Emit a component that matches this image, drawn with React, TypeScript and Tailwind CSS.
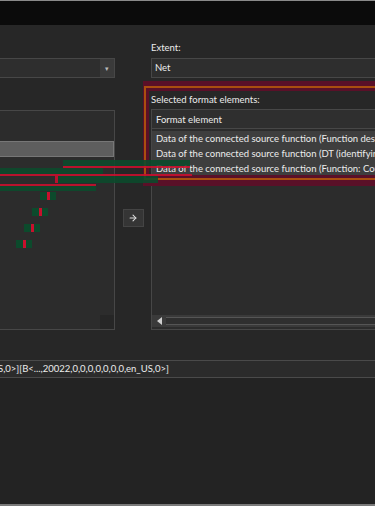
import { ArrowRight } from 'lucide-react';

const rows = [
  'Data of the connected source function (Function designation)',
  'Data of the connected source function (DT (identifying letter))',
  'Data of the connected source function (Function: Counter)',
];

// diff-style connector marks drawn over the tree on the left
const marks = [
  { l: 63, t: 160, w: 127, h: 6, c: 'bg-[#0c4a2c]' },
  { l: 63, t: 166, w: 127, h: 2, c: 'bg-[#c8102e]' },
  { l: 0, t: 168, w: 103, h: 6, c: 'bg-[#0c4a2c]' },
  { l: 0, t: 174, w: 192, h: 2, c: 'bg-[#c8102e]' },
  { l: 58, t: 176, w: 100, h: 7, c: 'bg-[#0c4a2c]' },
  { l: 55, t: 176, w: 3, h: 7, c: 'bg-[#c8102e]' },
  { l: 0, t: 184, w: 96, h: 2, c: 'bg-[#c8102e]' },
  { l: 0, t: 186, w: 96, h: 5, c: 'bg-[#0c4a2c]' },
];

const steps = [
  { x: 40, y: 192 },
  { x: 32, y: 208 },
  { x: 24, y: 224 },
  { x: 16, y: 240 },
];

export default function App() {
  return (
    <div
      className="relative w-[375px] h-[506px] overflow-hidden bg-[#272727] text-[9.5px] text-[#ececec] flex flex-col"
      style={{ fontFamily: 'Lato, "Noto Sans", sans-serif' }}
    >
      <div className="h-[25px] shrink-0 border-t border-[#8a8a8a] bg-[#0b0b0b]" />

      <div className="flex h-[330px] shrink-0">
        <div className="w-[115px] flex flex-col pt-[33px]">
          <div className="h-[20px] flex border border-l-0 border-[#474747] bg-[#2e2e2e]">
            <div className="flex-1" />
            <div className="w-[14px] bg-[#3a3a3a] flex items-center justify-center text-[7px] text-[#bbb]">▾</div>
          </div>
          <div className="relative mt-[32px] h-[220px] border border-l-0 border-[#474747] bg-[#2c2c2c]">
            <div className="mt-[30px] h-[16px] bg-[#5e5e5e] border border-l-0 border-[#777]" />
            <div className="absolute right-0 bottom-0 w-[14px] h-[14px] bg-[#262626]" />
          </div>
        </div>

        <div className="w-[36px] flex flex-col items-center pt-[184px]">
          <div className="w-[21px] h-[18px] bg-[#353535] border border-[#444] flex items-center justify-center">
            <ArrowRight className="w-[10px] h-[10px] text-[#e0e0e0]" strokeWidth={2.5} />
          </div>
        </div>

        <div className="flex-1 flex flex-col pt-[16px] min-w-0">
          <div className="h-[13px] leading-[13px]">Extent:</div>
          <div className="mt-[4px] h-[20px] border border-r-0 border-[#474747] bg-[#2e2e2e] px-[3px] leading-[18px]">Net</div>
          <div className="mt-[16px] h-[12px] leading-[12px]">Selected format elements:</div>
          <div className="relative mt-[3px] h-[221px] border border-r-0 border-[#474747] bg-[#2c2c2c] overflow-hidden whitespace-nowrap">
            <div className="h-[19px] leading-[19px] px-[4px] bg-[#2f2f2f] border-b border-[#474747]">Format element</div>
            <div className="mt-[2px]">
              {rows.map((r, i) => (
                <div key={i} className="h-[15px] leading-[15px] px-[4px] bg-[#3e3e3e]">{r}</div>
              ))}
            </div>
            <div className="absolute left-0 right-0 bottom-[2px] h-[12px] bg-[#3a3a3a] flex items-center">
              <div className="ml-[5px] w-0 h-0 border-y-[4px] border-y-transparent border-r-[5px] border-r-[#cfcfcf]" />
              <div className="ml-[4px] flex-1 h-[8px] bg-[#2f2f2f] border-y border-[#555]" />
            </div>
          </div>
        </div>
      </div>

      <div className="mt-[5px] h-[18px] shrink-0 border-y border-[#4a4a4a] bg-[#2b2b2b] leading-[16px] whitespace-nowrap overflow-hidden">
        <span className="-ml-[2px] inline-block">S,0&gt;][B&lt;...,20022,0,0,0,0,0,0,0,en_US,0&gt;]</span>
      </div>
      <div className="flex-1 bg-[#232323] border-b-2 border-[#7a7a7a]" />

      {/* highlight frame */}
      <div className="absolute left-[143px] top-[81px] right-[-10px] h-[105px] border-t-[5px] border-l border-b-[6px] border-[#5a1028] pointer-events-none">
        <div className="h-full border-2 border-[#a94f0f]">
          <div className="h-full border-[3px] border-[#5a1028]" />
        </div>
      </div>

      {marks.map((m, i) => (
        <div
          key={i}
          className={`absolute ${m.c} opacity-90`}
          style={{ left: m.l, top: m.t, width: m.w, height: m.h }}
        />
      ))}
      {steps.map((s, i) => (
        <div key={i} className="absolute flex h-[8px]" style={{ left: s.x, top: s.y }}>
          <div className="w-[7px] bg-[#0c4a2c]" />
          <div className="w-[3px] bg-[#c8102e]" />
          <div className="w-[6px] bg-[#0c4a2c]" />
        </div>
      ))}
    </div>
  );
}
